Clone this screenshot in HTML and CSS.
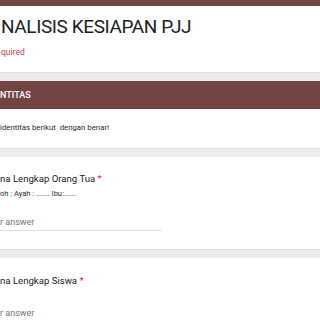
FILE: index.html
```html
<!DOCTYPE html>
<html lang="id">
<head>
    <meta charset="UTF-8">
    <meta name="viewport" content="width=device-width, initial-scale=1.0">
    <title>Analisis Kesiapan PJJ</title>
    <link rel="stylesheet" href="styles.css">
</head>
<body>
    <div class="form">
        <div class="card title-card">
            <h1>NALISIS KESIAPAN PJJ</h1>
            <div class="required">quired</div>
        </div>

        <div class="section">
            <div class="section-head">NTITAS</div>
            <div class="section-desc">identitas berikut&nbsp; dengan benar!</div>
        </div>

        <div class="card question">
            <div class="q-title">na Lengkap Orang Tua <span class="star">*</span></div>
            <div class="q-help">oh : Ayah : ....... Ibu:......</div>
            <div class="answer">r answer</div>
        </div>

        <div class="card question">
            <div class="q-title">na Lengkap Siswa <span class="star">*</span></div>
            <div class="answer">r answer</div>
        </div>
    </div>
</body>
</html>
```

FILE: styles.css
```css
* {
    margin: 0;
    padding: 0;
    box-sizing: border-box;
}

body {
    font-family: Roboto, "Noto Sans", sans-serif;
    background: #efebeb;
    width: 320px;
    height: 320px;
    overflow: hidden;
}

.form {
    display: flex;
    flex-direction: column;
    gap: 8px;
}

.card {
    background: white;
    border-bottom: 1px solid #e4dfdf;
}

.title-card {
    border-top: 6px solid #744443;
    height: 73px;
    padding: 8px 0 0 1px;
}

h1 {
    font-weight: 400;
    font-size: 19px;
    line-height: 25px;
    letter-spacing: -0.4px;
    color: #202124;
}

.required {
    margin-top: 7px;
    font-size: 8.5px;
    line-height: 12px;
    color: #c5443f;
}

.section {
    background: white;
    border-bottom: 1px solid #e4dfdf;
}

.section-head {
    background: #744443;
    height: 28px;
    line-height: 29px;
    font-size: 9px;
    font-weight: 500;
    color: white;
}

.section-desc {
    height: 39px;
    padding-top: 14px;
    font-size: 7.8px;
    line-height: 10px;
    color: #2a2a2a;
}

.question {
    padding: 15px 0 0 0;
}

.question:nth-child(3) {
    height: 93px;
}

.question:nth-child(4) {
    height: 70px;
    padding-top: 16px;
}

.q-title {
    font-size: 9.6px;
    line-height: 14px;
    color: #202124;
}

.star {
    color: #d93025;
}

.q-help {
    margin-top: 3px;
    font-size: 7.5px;
    line-height: 10px;
    color: #2a2a2a;
}

.answer {
    margin-top: 17px;
    width: 162px;
    padding-bottom: 2px;
    border-bottom: 1px solid #e0dcdc;
    font-size: 9px;
    line-height: 12px;
    color: #70757a;
}

.question:nth-child(4) .answer {
    margin-top: 19px;
}
```
